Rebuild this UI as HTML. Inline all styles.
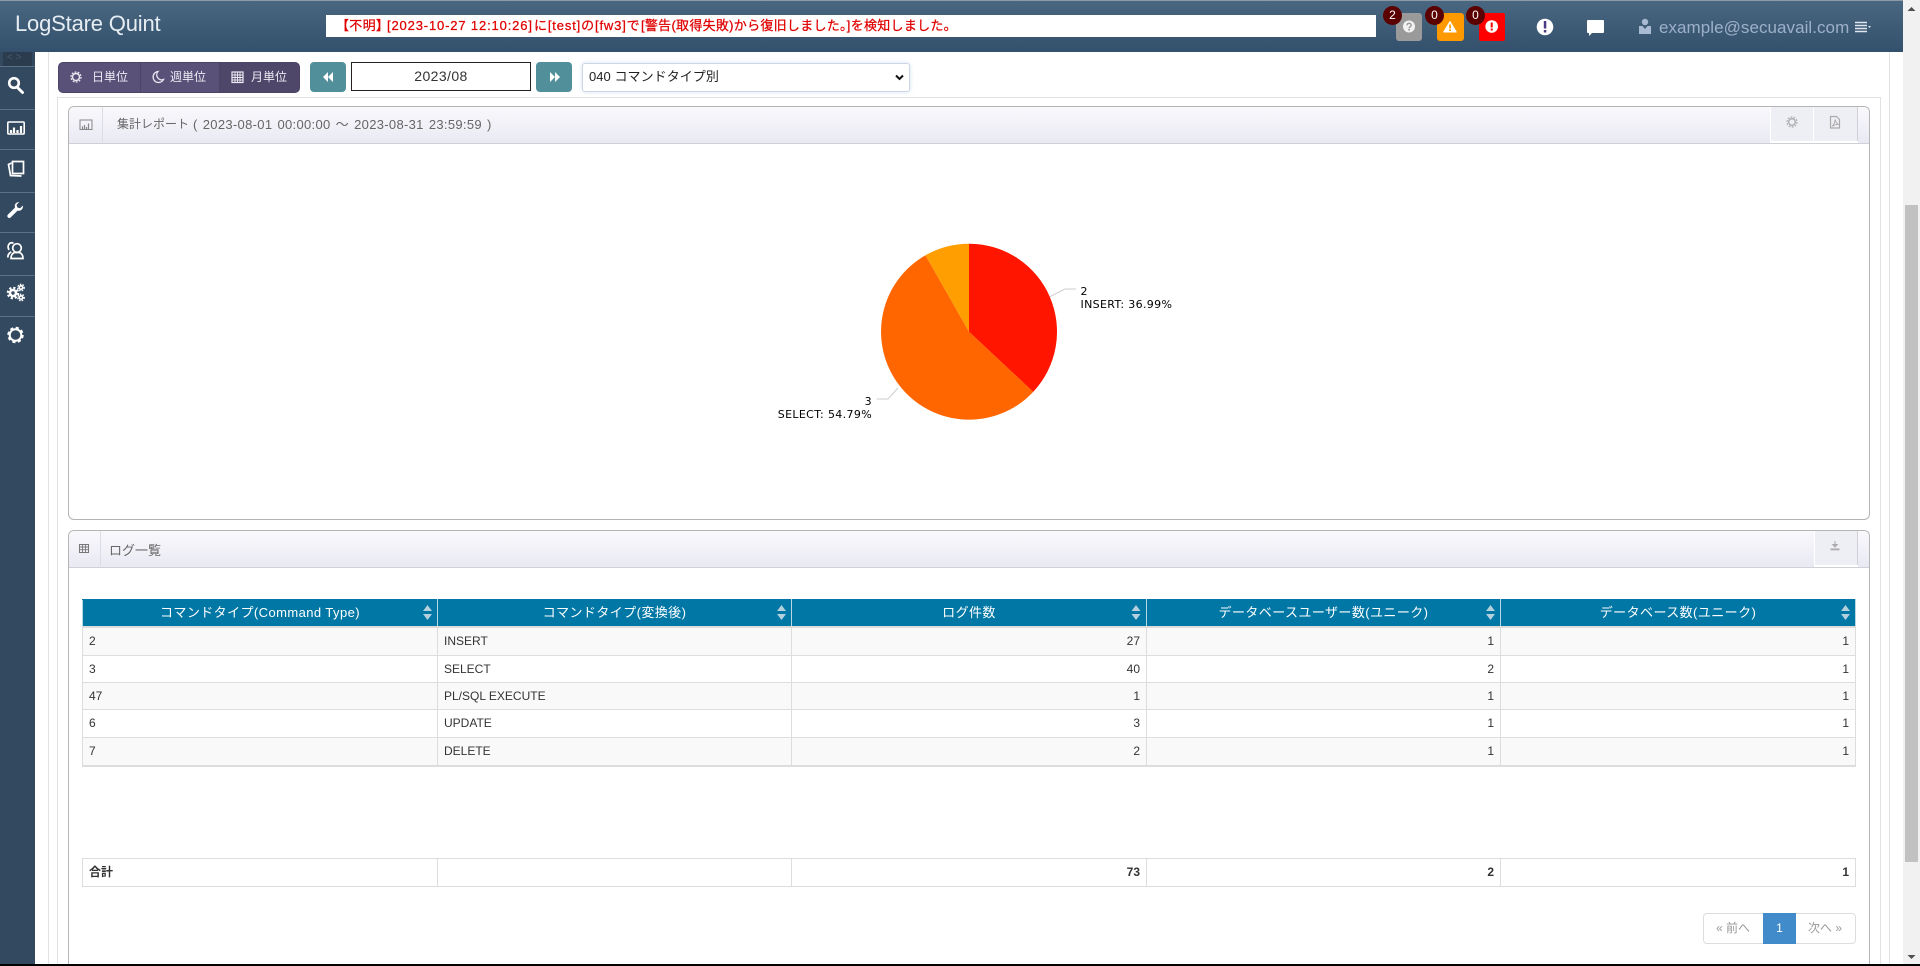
<!DOCTYPE html>
<html lang="ja"><head><meta charset="utf-8"><title>LogStare Quint</title>
<style>
html,body{margin:0;padding:0;width:1920px;height:966px;overflow:hidden;background:#fff}
body{position:relative;font-family:"Liberation Sans","Noto Sans CJK JP",sans-serif;font-size:12px;color:#333}
.a{position:absolute;box-sizing:border-box}
.t{position:absolute;white-space:nowrap;line-height:1}
.ph{position:absolute;background:linear-gradient(#f9f9fc,#e9e9f3);border-bottom:1px solid #d0d0d8}
.b{font-size:13px;color:#e00000;-webkit-text-stroke:.25px #e00000;top:19px}
table{position:absolute;border-collapse:collapse;table-layout:fixed;font-size:12px;color:#333}
td,th{box-sizing:border-box;padding:0 6px;border:1px solid #ddd;white-space:nowrap;overflow:hidden}
th{background:#0077a5;color:#fff;font-weight:normal;font-size:13px;letter-spacing:.42px;border-color:#b9d6e3;border-top:1px solid #0077a5;border-bottom:0;text-align:center;height:27px;padding-bottom:2px}
td.r{text-align:right}
tbody.d tr:nth-child(odd) td{background:#f9f9f9}
tbody.d td{height:27px;padding-bottom:1px}
tbody.d tr:nth-child(1) td{height:29px;border-top:2px solid #ddd}
tbody.d tr:nth-child(4) td{height:28px;padding-bottom:2px}
tbody.d tr:nth-child(5) td{height:28px;border-bottom:2px solid #ddd}
</style></head><body>

<!-- main frame lines -->
<div class="a" style="left:48px;top:52px;width:1842px;height:912px;border-left:1px solid #e2e2e2;border-right:1px solid #e2e2e2"></div>
<div class="a" style="left:57px;top:97px;width:1824px;height:867px;border:1px solid #e2e2e2;border-bottom:0"></div>

<!-- scrollbar -->
<div class="a" style="left:1903px;top:0;width:17px;height:964px;background:#f1f1f1"></div>
<div class="a" style="left:1905px;top:205px;width:13px;height:657px;background:#c1c1c1"></div>

<!-- header -->
<div class="a" style="left:0;top:0;width:1903px;height:52px;background:linear-gradient(#4a6781,#33506c);border-top:1px solid #8d9aa6"></div>
<div class="t" style="left:15px;top:13px;font-size:22px;letter-spacing:-.18px;color:#e6edf2">LogStare Quint</div>
<div class="a" style="left:326px;top:15px;width:1050px;height:22px;background:#fff"></div>
<div class="t b" style="left:336px;letter-spacing:.3px">【不明】</div>
<div class="t b" style="left:387px;letter-spacing:.85px">[2023-10-27 12:10:26]</div>
<div class="t b" style="left:534px;letter-spacing:.85px">に[test]の[fw3]で</div>
<div class="t b" style="left:641px;letter-spacing:.28px">[警告(取得失敗)から復旧しました。]を検知しました。</div>
<div class="a" style="left:1396px;top:13px;width:26px;height:28px;background:#9a9a9a;border-radius:3px"></div>
<div class="a" style="left:1437px;top:13px;width:27px;height:28px;background:#ff9900;border-radius:3px"></div>
<div class="a" style="left:1479px;top:13px;width:26px;height:28px;background:#ff0000;border-radius:2px"></div>
<div class="a" style="left:1383px;top:6px;width:19px;height:19px;border-radius:10px;background:#5a0000;color:#fff;font-size:12px;line-height:18px;text-align:center">2</div>
<div class="a" style="left:1425px;top:6px;width:19px;height:19px;border-radius:10px;background:#5a0000;color:#fff;font-size:12px;line-height:18px;text-align:center">0</div>
<div class="a" style="left:1466px;top:6px;width:19px;height:19px;border-radius:10px;background:#5a0000;color:#fff;font-size:12px;line-height:18px;text-align:center">0</div>
<div class="t" style="left:1659px;top:19px;font-size:17px;letter-spacing:.05px;color:#9db0c8">example@secuavail.com</div>

<!-- sidebar -->
<div class="a" style="left:0;top:52px;width:35px;height:912px;background:#33495f"></div>
<div class="a" style="left:3px;top:52px;width:29px;height:14px;background:#2b3c4e"></div>
<div class="t" style="left:7px;top:53px;font-size:10px;color:#465a6d">&lt;&nbsp;&gt;</div>
<div class="a" style="left:0;top:66px;width:35px;height:1px;background:#5a7087"></div>
<div class="a" style="left:0;top:109px;width:35px;height:1px;background:#5a7087"></div>
<div class="a" style="left:0;top:149px;width:35px;height:1px;background:#5a7087"></div>
<div class="a" style="left:0;top:192px;width:35px;height:1px;background:#5a7087"></div>
<div class="a" style="left:0;top:232px;width:35px;height:1px;background:#5a7087"></div>
<div class="a" style="left:0;top:275px;width:35px;height:1px;background:#5a7087"></div>
<div class="a" style="left:0;top:316px;width:35px;height:1px;background:#5a7087"></div>

<!-- toolbar -->
<div class="a" style="left:58px;top:62px;width:242px;height:31px;background:#5a5179;border-radius:5px;border:1px solid #4b4467;overflow:hidden">
  <div class="a" style="left:160px;top:0;width:80px;height:29px;background:#4f4769"></div>
  <div class="a" style="left:81px;top:0;width:1px;height:29px;background:#4b4467"></div>
  <div class="a" style="left:160px;top:0;width:1px;height:29px;background:#4b4467"></div>
</div>
<div class="t" style="left:92px;top:71px;font-size:12px;color:#eceaf3">日単位</div>
<div class="t" style="left:170px;top:71px;font-size:12px;color:#eceaf3">週単位</div>
<div class="t" style="left:251px;top:71px;font-size:12px;color:#eceaf3">月単位</div>
<div class="a" style="left:310px;top:62px;width:36px;height:30px;background:#518f9b;border-radius:4px"></div>
<div class="a" style="left:351px;top:62px;width:180px;height:29px;border:1.5px solid #222;background:#fff"></div>
<div class="t" style="left:351px;top:69px;width:180px;text-align:center;font-size:14px;letter-spacing:.4px;color:#333">2023/08</div>
<div class="a" style="left:536px;top:62px;width:36px;height:30px;background:#518f9b;border-radius:4px"></div>
<div class="a" style="left:582px;top:63px;width:328px;height:29px;background:#fff;border:1px solid #cdd6e4;border-radius:3px;box-shadow:0 0 5px #d5e2f2"></div>
<div class="t" style="left:589px;top:70px;font-size:13px;letter-spacing:.05px;color:#222">040 コマンドタイプ別</div>

<!-- panel 1 -->
<div class="a" style="left:68px;top:106px;width:1802px;height:414px;border:1px solid #b5b5b5;border-radius:6px;background:#fff;overflow:hidden">
  <div class="ph" style="left:0;top:0;width:1800px;height:36px"></div>
  <div class="a" style="left:33px;top:0;width:1px;height:35px;background:#dcdce4"></div>
  <div class="a" style="left:1701px;top:0;width:44px;height:34px;border-left:1px solid #fff;border-right:1px solid #fff;background:#eeeef5;box-shadow:0 2px 0 #fff"></div>
  <div class="a" style="left:1745px;top:0;width:44px;height:34px;border-right:1px solid #d0d0d8;background:#eeeef5;box-shadow:0 2px 0 #fff"></div>
</div>
<div class="t" style="left:117px;top:118px;font-size:12px;color:#666">集計レポート</div>
<div class="t" style="left:193px;top:118px;font-size:13px;color:#666;word-spacing:1.2px;letter-spacing:.31px">( 2023-08-01 00:00:00 〜 2023-08-31 23:59:59 )</div>

<!-- panel 2 -->
<div class="a" style="left:68px;top:530px;width:1802px;height:440px;border:1px solid #b5b5b5;border-radius:6px;background:#fff;overflow:hidden">
  <div class="ph" style="left:0;top:0;width:1800px;height:36px"></div>
  <div class="a" style="left:31px;top:0;width:1px;height:35px;background:#dcdce4"></div>
  <div class="a" style="left:1745px;top:0;width:44px;height:34px;border-left:1px solid #fff;border-right:1px solid #d0d0d8;background:#eeeef5;box-shadow:0 2px 0 #fff"></div>
</div>
<div class="t" style="left:109px;top:544px;font-size:13px;color:#666">ログ一覧</div>

<!-- data table -->
<table style="left:82px;top:599px;width:1773px">
<colgroup><col style="width:355px"><col style="width:354px"><col style="width:355px"><col style="width:354px"><col style="width:355px"></colgroup>
<thead><tr><th>コマンドタイプ(Command Type)</th><th>コマンドタイプ(変換後)</th><th>ログ件数</th><th>データベースユーザー数(ユニーク)</th><th>データベース数(ユニーク)</th></tr></thead>
<tbody class="d">
<tr><td>2</td><td>INSERT</td><td class="r">27</td><td class="r">1</td><td class="r">1</td></tr>
<tr><td>3</td><td>SELECT</td><td class="r">40</td><td class="r">2</td><td class="r">1</td></tr>
<tr><td>47</td><td>PL/SQL EXECUTE</td><td class="r">1</td><td class="r">1</td><td class="r">1</td></tr>
<tr><td>6</td><td>UPDATE</td><td class="r">3</td><td class="r">1</td><td class="r">1</td></tr>
<tr><td>7</td><td>DELETE</td><td class="r">2</td><td class="r">1</td><td class="r">1</td></tr>
</tbody></table>

<!-- total table -->
<table style="left:82px;top:858px;width:1773px;font-weight:bold">
<colgroup><col style="width:355px"><col style="width:354px"><col style="width:355px"><col style="width:354px"><col style="width:355px"></colgroup>
<tr style="height:28px"><td style="padding-bottom:2px">合計</td><td></td><td class="r" style="padding-bottom:2px">73</td><td class="r" style="padding-bottom:2px">2</td><td class="r" style="padding-bottom:2px">1</td></tr>
</table>

<!-- pagination -->
<div class="a" style="left:1703px;top:913px;width:153px;height:31px;border:1px solid #ddd;border-radius:4px;background:#fff"></div>
<div class="a" style="left:1763px;top:913px;width:33px;height:31px;background:#428bca"></div>
<div class="t" style="left:1716px;top:922px;font-size:12px;color:#999">« 前へ</div>
<div class="t" style="left:1763px;top:922px;width:33px;text-align:center;font-size:12px;color:#fff">1</div>
<div class="t" style="left:1808px;top:922px;font-size:12px;color:#999">次へ »</div>

<!-- icons + chart -->
<svg class="a" style="left:0;top:0" width="1920" height="966" viewBox="0 0 1920 966">
  <!-- scrollbar arrows -->
  <path d="M1911.5 7l4 4h-8z" fill="#505050"/><path d="M1911.5 959l4-4h-8z" fill="#505050"/>
  <!-- header icons -->
  <circle cx="1409" cy="26.500" r="6" fill="#f2f2f2"/>
  <path d="M1407 25.300c.2-2.600 4.200-2.600 4.200-.1 0 1.600-2.100 1.600-2.100 3" fill="none" stroke="#9a9a9a" stroke-width="1.400"/><rect x="1408.300" y="29" width="1.600" height="1.600" fill="#9a9a9a"/>
  <path d="M1450 21.500l6.300 10.500h-12.600z" fill="#fff" stroke="#fff" stroke-linejoin="round"/>
  <rect x="1449.200" y="24.500" width="1.700" height="4" fill="#ff9900"/><rect x="1449.200" y="29.300" width="1.700" height="1.700" fill="#ff9900"/>
  <circle cx="1491.700" cy="26.500" r="6.300" fill="#fff"/>
  <rect x="1490.700" y="22.500" width="2" height="5" fill="#f00"/><rect x="1490.700" y="28.500" width="2" height="2" fill="#f00"/>
  <circle cx="1545" cy="27" r="8.300" fill="#fff"/>
  <rect x="1543.800" y="21" width="2.500" height="7.500" fill="#4b3a85"/><rect x="1543.800" y="30" width="2.500" height="2.500" fill="#4b3a85"/>
  <path d="M1588 20h15a1 1 0 0 1 1 1v11a1 1 0 0 1-1 1h-11l-3 3v-3h-1a1 1 0 0 1-1-1v-11a1 1 0 0 1 1-1z" fill="#fff"/>
  <circle cx="1645" cy="22" r="3.200" fill="#a9bad2"/><path d="M1639 26h3.500l2.500 3 2.500-3h3.500v8h-12z" fill="#a9bad2"/>
  <path d="M1855 22.500h12M1855 25.500h12M1855 28.500h12M1855 31.500h12" stroke="#dfe5ec" stroke-width="1.500"/><path d="M1868 26h3l-1.500 2z" fill="#dfe5ec"/>
  <!-- sidebar icons -->
  <circle cx="14" cy="83" r="4.800" fill="none" stroke="#fff" stroke-width="2.600"/><path d="M17.500 87.500l5 5" stroke="#fff" stroke-width="3" stroke-linecap="round"/>
  <rect x="7.800" y="122" width="16.400" height="12" fill="none" stroke="#fff" stroke-width="1.600" rx="1"/><path d="M11 133v-3M14 133v-5.500M17.500 133v-3M21 133v-7" stroke="#fff" stroke-width="2.200"/>
  <path d="M12.500 161.500h11v12h-11z" fill="none" stroke="#fff" stroke-width="1.700"/><path d="M11.500 163l-3 1.500 2 11 11 .5" fill="none" stroke="#fff" stroke-width="1.700"/>
  <path d="M8 217.500a2.200 2.200 0 0 1 0-3l7-6.900c-1-3 1-5.600 4.200-5.600l-2.700 2.900.9 2.600 2.700.7 2.900-2.700c.4 3.600-2.400 6-5.400 5.100l-6.900 6.800a2 2 0 0 1-2.700.1z" fill="#fff"/>
  <path d="M9 250c-2.500-5 1-8.500 4.500-6.700M7.800 257.500c0-3 1.500-4.700 3.500-5.600" fill="none" stroke="#fff" stroke-width="1.700"/>
  <circle cx="17" cy="248" r="4.300" fill="none" stroke="#fff" stroke-width="1.700"/><path d="M11 258.500c0-3.500 1.500-5.200 3.500-6h5c2 .8 3.500 2.500 3.500 6z" fill="none" stroke="#fff" stroke-width="1.700"/>
  <circle cx="13" cy="293" r="3" fill="none" stroke="#fff" stroke-width="2.600"/><circle cx="13" cy="293" r="5.200" fill="none" stroke="#fff" stroke-width="2.200" stroke-dasharray="2.200 1.900"/>
  <circle cx="21" cy="287.500" r="1.700" fill="none" stroke="#fff" stroke-width="1.600"/><circle cx="21" cy="287.500" r="3.200" fill="none" stroke="#fff" stroke-width="1.400" stroke-dasharray="1.500 1.200"/>
  <circle cx="21" cy="297.500" r="1.700" fill="none" stroke="#fff" stroke-width="1.600"/><circle cx="21" cy="297.500" r="3.200" fill="none" stroke="#fff" stroke-width="1.400" stroke-dasharray="1.500 1.200"/>
  <circle cx="15.500" cy="335" r="5.800" fill="none" stroke="#fff" stroke-width="2"/><circle cx="15.500" cy="335" r="7.300" fill="none" stroke="#fff" stroke-width="1.800" stroke-dasharray="3.200 2.530"/>
  <!-- toolbar icons -->
  <circle cx="76" cy="77" r="3.500" fill="none" stroke="#eceaf3" stroke-width="1.400"/><circle cx="76" cy="77" r="5" fill="none" stroke="#eceaf3" stroke-width="1.300" stroke-dasharray="1.800 1.340"/>
  <path d="M158 71.500a5.500 5.500 0 1 0 5.500 8 5 5 0 0 1-5.500-8z" fill="none" stroke="#eceaf3" stroke-width="1.300"/>
  <rect x="232" y="72" width="11" height="10.500" fill="none" stroke="#eceaf3" stroke-width="1.200"/><path d="M232 75h11M232 77.500h11M232 80h11M235 72v10.500M237.500 72v10.500M240 72v10.500" fill="none" stroke="#eceaf3" stroke-width=".9"/>
  <path d="M328 72v10l-5-5zM333 72v10l-5-5z" fill="#fff"/>
  <path d="M550 72v10l5-5zM555 72v10l5-5z" fill="#fff"/>
  <path d="M896 75.500l3.500 3.500 3.500-3.500" fill="none" stroke="#111" stroke-width="2"/>
  <!-- panel 1 icons -->
  <rect x="80" y="120" width="12" height="9.500" fill="none" stroke="#888" stroke-width="1"/><path d="M82.500 129v-2.500M84.500 129v-4M86.500 129v-2M88.500 129v-5.500" stroke="#888" stroke-width="1.200"/>
  <circle cx="1792" cy="122" r="3.300" fill="none" stroke="#aaa" stroke-width="1.300"/><circle cx="1792" cy="122" r="5" fill="none" stroke="#aaa" stroke-width="1.200" stroke-dasharray="1.800 1.340"/>
  <path d="M1830.500 116.500h6l3 3v8.500h-9z" fill="none" stroke="#aaa" stroke-width="1.200"/><path d="M1832 126.500c2-2 3-5 3.200-7 .6 3 2 4.500 3.500 5-2-.2-4.500.3-6.700 2z" fill="none" stroke="#aaa" stroke-width=".9"/>
  <!-- panel 2 icons -->
  <rect x="79.500" y="544.500" width="9" height="8" fill="none" stroke="#777" stroke-width="1"/><path d="M79.500 547h9M79.500 549.700h9M82.500 544.500v8M85.500 544.500v8" stroke="#777" stroke-width=".9"/>
  <path d="M1835 541v5M1832.800 544.500l2.200 2.500 2.200-2.500z" fill="#aaa" stroke="#aaa"/><path d="M1830.500 548.500h9v1.800h-9z" fill="#aaa"/>
  <!-- sort arrows -->
  <g fill="#b4cfdd">
    <path d="M427.500 605l-4.500 6h9zM427.500 620l-4.500-6h9z"/>
    <path d="M781.500 605l-4.500 6h9zM781.500 620l-4.500-6h9z"/>
    <path d="M1136 605l-4.500 6h9zM1136 620l-4.500-6h9z"/>
    <path d="M1490.500 605l-4.500 6h9zM1490.500 620l-4.500-6h9z"/>
    <path d="M1845.500 605l-4.500 6h9zM1845.500 620l-4.500-6h9z"/>
  </g>
  <!-- pie -->
  <path d="M969 331.700V243.700A88 88 0 0 1 1033.200 391.900z" fill="#ff1500"/>
  <path d="M969 331.700L1033.200 391.900A88 88 0 1 1 925.500 255.200z" fill="#ff6600"/>
  <path d="M969 331.700L925.500 255.200A88 88 0 0 1 969 243.700z" fill="#ff9e01"/>
  <path d="M1050 296.700L1065 289H1076" fill="none" stroke="#ccc"/>
  <path d="M898 388L888 399H876.700" fill="none" stroke="#ccc"/>
  <g font-family="'DejaVu Sans',sans-serif" font-size="11" fill="#000" letter-spacing=".35">
    <text x="1080.500" y="295">2</text>
    <text x="1080.500" y="308">INSERT: 36.99%</text>
    <text x="872" y="405" text-anchor="end">3</text>
    <text x="872" y="418" text-anchor="end">SELECT: 54.79%</text>
  </g>
</svg>

<!-- bottom edge -->
<div class="a" style="left:0;top:964px;width:1920px;height:2px;background:#000"></div>
</body></html>
